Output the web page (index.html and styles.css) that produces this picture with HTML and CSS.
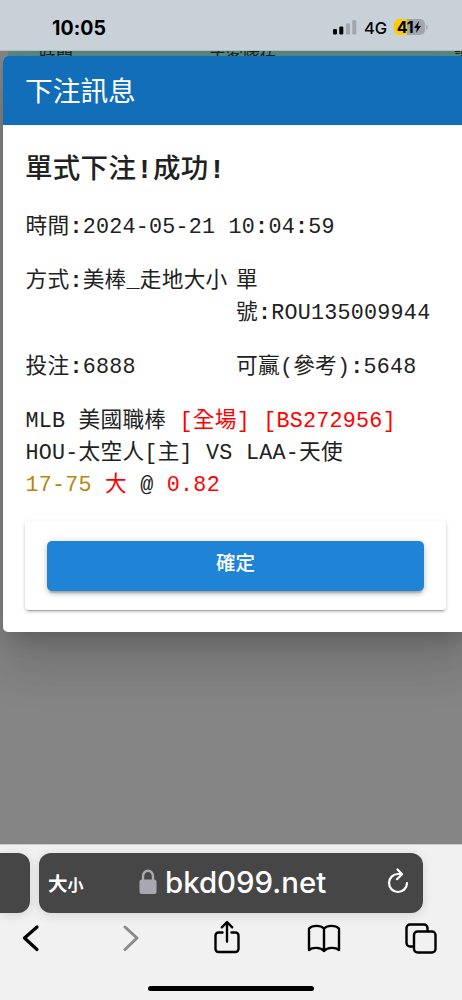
FILE: index.html
```
<!DOCTYPE html>
<html lang="zh-Hant">
<head>
	<meta charset="utf-8">
	<title>下注訊息</title>
	<link rel="stylesheet" href="styles.css">
</head>
<body>
	<div class="status">
		<span class="clock">10:05</span>
		<svg class="signal" width="24" height="15" viewBox="0 0 24 15">
			<rect x="0" y="9" width="4" height="5.5" rx="1.2" />
			<rect x="6.3" y="6.5" width="4" height="8" rx="1.2" />
			<g fill="#a0a7af">
				<rect x="13" y="3.3" width="4" height="11.2" rx="1.2" />
				<rect x="19.3" y="0" width="4" height="14.5" rx="1.2" />
			</g>
		</svg>
		<span class="net">4G</span>
		<span class="battery">41<svg width="7" height="12" viewBox="0 0 7 12"><path d="M5 0L0 7h3L2 12 7 5H4z" /></svg></span>
		<i class="battery-tip"></i>
	</div>

	<div class="page">
		<div class="thead">
			<span>時間</span><span>主客隊伍</span><span>讓分</span>
		</div>

		<div class="dialog">
			<h1>下注訊息</h1>
			<div class="content">
				<h2>單式下注<b>!</b>成功<b>!</b></h2>
				<div class="row">時間<b>:</b>2024-05-21 10<b>:</b>04<b>:</b>59</div>
				<div class="row cols">
					<div>方式<b>:</b>美棒_走地大小</div>
					<div>單<br>號<b>:</b>ROU135009944</div>
				</div>
				<div class="row cols">
					<div>投注<b>:</b>6888</div>
					<div>可贏(參考)<b>:</b>5648</div>
				</div>
				<div class="row">
					MLB 美國職棒 <span class="red">[全場] [BS272956]</span><br>
					HOU-太空人[主] VS LAA-天使<br>
					<span class="gold">17-75</span> <span class="red">大</span> @ <span class="red">0.82</span>
				</div>
				<div class="card">
					<button type="button">確定</button>
				</div>
			</div>
		</div>
	</div>

	<div class="browser">
		<div class="tabs">
			<div class="tab prev"></div>
			<div class="tab">
				<span class="aa">大<small>小</small></span>
				<span class="url">
					<svg width="18" height="26" viewBox="0 0 18 26">
						<path d="M4 12V7.5a5 5.8 0 0 1 10 0V12" fill="none" stroke="#a9a8b0" stroke-width="2.4" />
						<rect x="0.5" y="10.5" width="17" height="14.5" rx="2.5" fill="#a9a8b0" />
					</svg>
					bkd099.net
				</span>
				<svg class="reload" width="22" height="26" viewBox="0 0 22 26">
					<path d="M14.500 6H11a9 9 0 1 0 9 9M10.500 1.500l4.500 4.700-5 5" />
				</svg>
			</div>
		</div>
		<div class="tools">
			<svg width="34" height="36" viewBox="0 0 34 36"><path d="M22 7L9.500 18 22 29.500" stroke-width="3.2" /></svg>
			<svg width="34" height="36" viewBox="0 0 34 36"><path class="off" d="M13 7L25 18 13 29.500" stroke-width="3" /></svg>
			<svg width="34" height="36" viewBox="0 0 34 36"><path d="M12.500 12.500H8.500a3 3 0 0 0-3 3V29a3 3 0 0 0 3 3h17a3 3 0 0 0 3-3V15.500a3 3 0 0 0-3-3h-4M17 21.500V2.500M11.800 7.300L17 2l5.200 5.300" /></svg>
			<svg width="34" height="36" viewBox="0 0 34 36"><path d="M17 8.500C13.500 5 5.500 5 2 8.500V30c3.500-3 11.500-3 15 1 3.500-4 11.500-4 15-1V8.500C28.500 5 20.500 5 17 8.500zM17 8.500V31" /></svg>
			<svg width="34" height="36" viewBox="0 0 34 36"><path d="M9.500 26.500H6a3.500 3.500 0 0 1-3.500-3.500V8A3.500 3.500 0 0 1 6 4.500h14A3.500 3.500 0 0 1 23.500 8v3" /><rect x="10" y="11.500" width="21.500" height="21" rx="3.500" /></svg>
		</div>
		<div class="home"></div>
	</div>
</body>
</html>
```
FILE: styles.css
```
* { box-sizing: border-box; }
body { margin: 0; width: 462px; height: 1000px; overflow: hidden; display: flex; flex-direction: column; background: #858585; font-family: "Liberation Sans", "Noto Sans CJK TC", sans-serif; }

/* status bar */
.status { height: 51px; flex: none; display: flex; align-items: center; padding: 6px 0 0 52px; background: #c8d0d8; border-bottom: 1px solid #b4bcc2; font-family: Inter, sans-serif; color: #000; }
.clock { font-size: 19.500px; font-weight: 700; width: 281px; letter-spacing: 0.1px; }
.signal { margin-top: -2px; }
.net { margin-left: 7px; width: 29.500px; font-size: 16.500px; font-weight: 500; letter-spacing: -0.2px; }
.battery { display: flex; align-items: center; justify-content: center; width: 31px; height: 16px; margin-top: -2px; border-radius: 5px; background: linear-gradient(90deg, #fc0 42%, #a0a5ae 42%); font-size: 16px; font-weight: 700; line-height: 16px; letter-spacing: -0.3px; }
.battery svg { margin-left: 1px; }
.battery-tip { width: 2px; height: 5px; margin: -2px 0 0 1px; border-radius: 0 2px 2px 0; background: #a9b0b8; }

/* page behind the dialog */
.page { position: relative; height: 793px; flex: none; overflow: hidden; background: #858585; }
.thead { display: flex; width: 600px; height: 30px; margin-left: 8px; background: #5a8a80; color: #152522; font-family: "Noto Sans CJK TC", sans-serif; font-size: 17px; line-height: 9px; text-align: center; }
.thead span { width: 97px; border-right: 1px solid #6d7f78; }
.thead span:nth-child(2) { width: 277px; }
.thead span:nth-child(3) { padding-left: 72px; width: 180px; text-align: left; }

.dialog { position: absolute; top: 5px; left: 3px; width: 468px; height: 576px; border-radius: 5px; background: #fff; box-shadow: 0 15px 20px -9px rgba(0,0,0,.2), 0 32px 50px 4px rgba(0,0,0,.1), 0 12px 60px 11px rgba(0,0,0,.06); color: #212121; }
.dialog h1 { margin: 0; height: 69px; padding: 0 22px; border-radius: 5px 5px 0 0; background: #126eb8; color: #fff; font: 400 27.700px/67px "Noto Sans CJK TC", sans-serif; }
.content { padding: 30px 22px 0; font-family: "Liberation Mono", "Noto Sans CJK TC", monospace; font-size: 21.700px; line-height: 32px; letter-spacing: 0.25px; }
.content h2 { margin: 0 0 25px; font-size: 27.500px; line-height: 32px; font-weight: 500; letter-spacing: 0.3px; }
.row { margin-bottom: 22px; padding-left: 0.500px; white-space: nowrap; }
.row:nth-last-child(2) { margin-bottom: 19px; }
.cols { display: flex; }
.cols > div { width: 210.500px; }
.red { color: #f00; }
.gold { color: #b8860b; }
.card { width: 421px; height: 89px; padding: 20px 22px; border-radius: 4px; box-shadow: 0 3px 1px -2px rgba(0,0,0,.2), 0 2px 3px rgba(0,0,0,.14), 0 1px 4px rgba(0,0,0,.12); }
.card button { display: block; width: 377px; height: 50px; padding: 0 0 9px; border: 0; border-radius: 5px; background: #2084d6; color: #fff; font: 500 19.500px "Noto Sans CJK TC", sans-serif; box-shadow: 0 4px 2px -2px rgba(0,0,0,.2), 0 3px 4px rgba(0,0,0,.14), 0 1px 8px rgba(0,0,0,.14); }

/* browser bar */
.browser { flex: 1; background: #f1f1f1; border-top: 1px solid #ccc; overflow: hidden; }
.tabs { display: flex; gap: 9px; padding-top: 8px; }
.tab { display: flex; align-items: center; position: relative; width: 384px; height: 59.500px; border-radius: 12px; background: #464646; color: #fff; box-shadow: 0 2px 12px rgba(0,0,0,.12); }
.tab.prev { width: 30px; border-radius: 0 12px 12px 0; }
.aa { width: 100px; padding-left: 9px; font: 700 19.500px "Noto Sans CJK TC", sans-serif; }
.aa small { font-size: 16px; }
.url { display: flex; align-items: center; gap: 8px; width: 248px; font: 500 29.400px Inter, sans-serif; white-space: nowrap; }
.url svg { margin-top: -1px; }
.reload { margin-top: -4px; fill: none; stroke: #fff; stroke-width: 2.2; stroke-linecap: round; stroke-linejoin: round; }
.tools { display: flex; justify-content: space-between; padding: 7px 24px 0 15px; }
.tools svg { fill: none; stroke: #000; stroke-width: 2.4; stroke-linecap: round; stroke-linejoin: round; }
.tools .off { stroke: #8a8a8a; }
.home { width: 166px; height: 5px; margin: 30px 0 0 148px; border-radius: 3px; background: #000; }
```
